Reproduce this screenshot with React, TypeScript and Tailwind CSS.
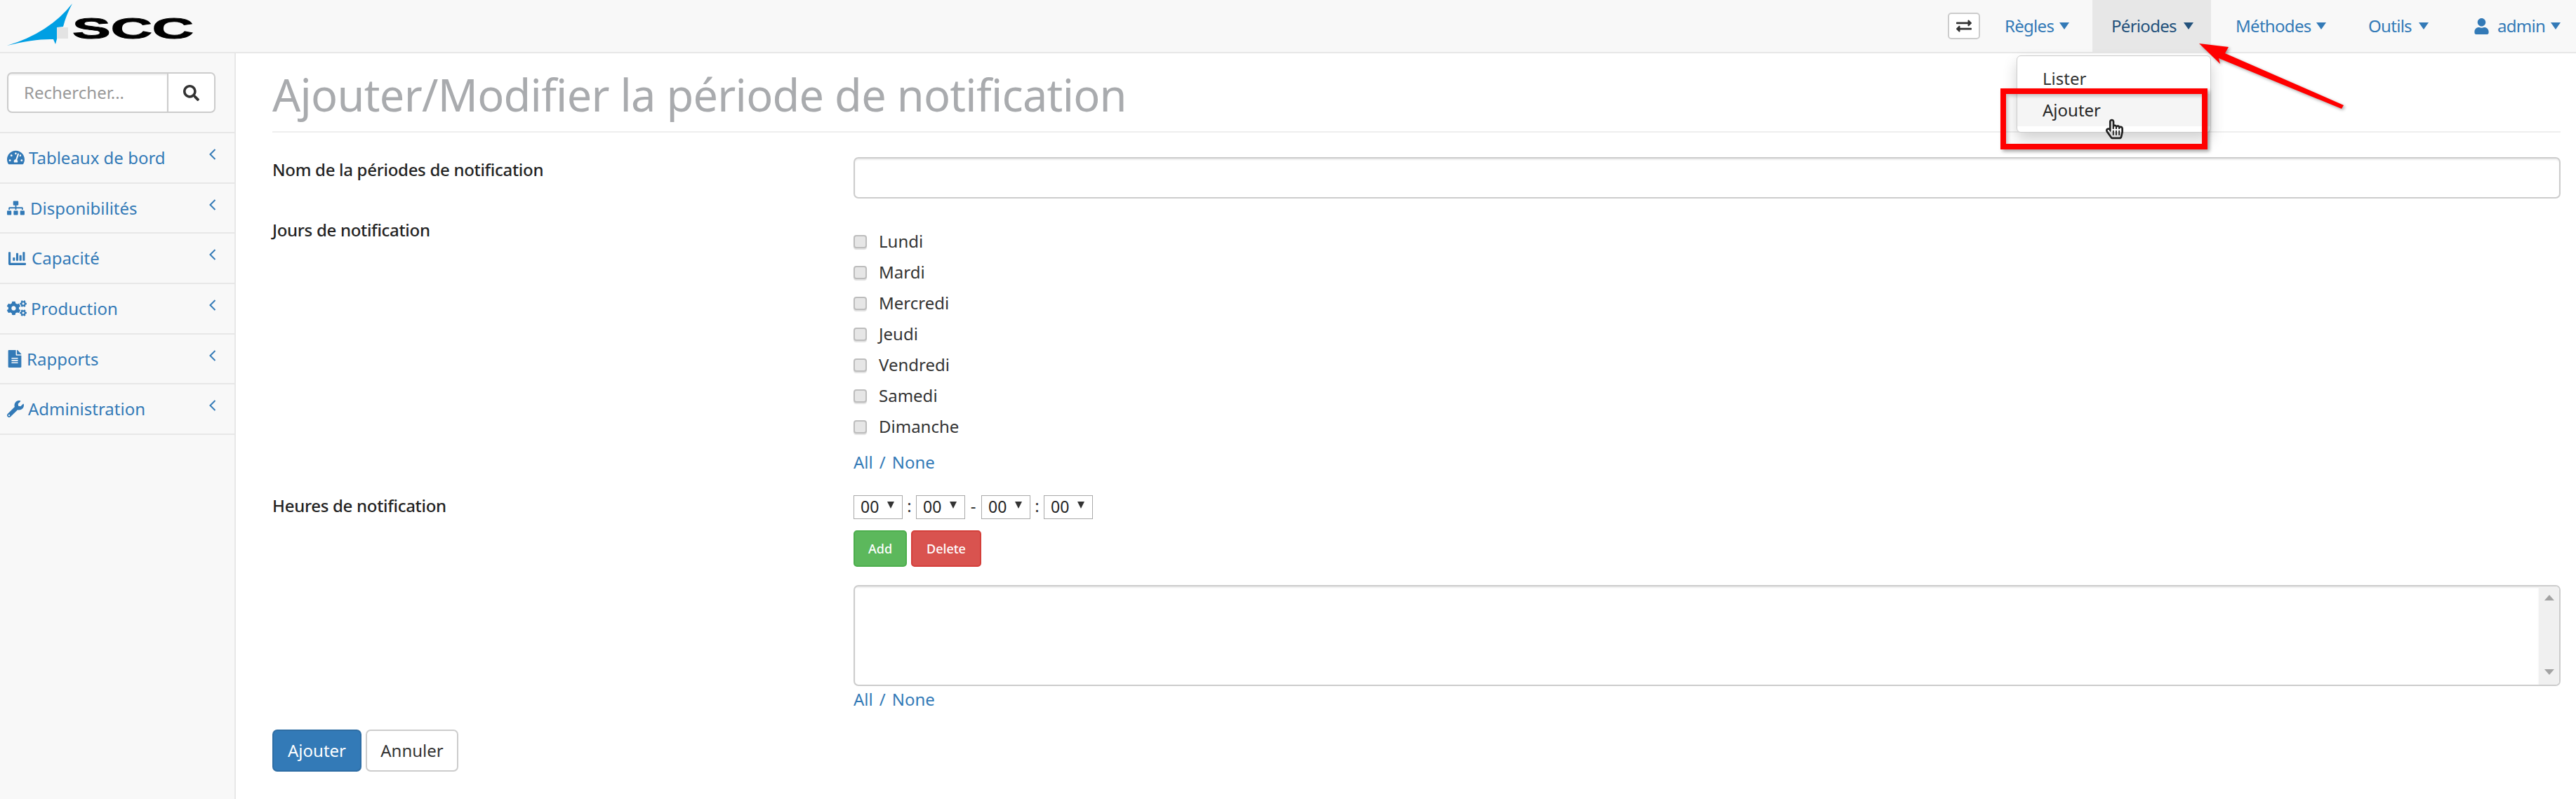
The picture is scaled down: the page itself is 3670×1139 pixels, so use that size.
import { FaChartBar, FaCogs, FaExchangeAlt, FaFileAlt, FaRegHandPointer, FaSearch, FaSitemap, FaTachometerAlt, FaUser, FaWrench } from "react-icons/fa";

const FONT = "font-['Noto_Sans',sans-serif]";

const SIDE_ITEMS = [
  { label: "Tableaux de bord", icon: <FaTachometerAlt className="h-[25px] w-[25px]" />, gap: "gap-[6px]" },
  { label: "Disponibilités", icon: <FaSitemap className="h-[25px] w-[25px]" />, gap: "gap-[8px]" },
  { label: "Capacité", icon: <FaChartBar className="h-[25px] w-[29px]" />, gap: "gap-[6px]" },
  { label: "Production", icon: <FaCogs className="h-[25px] w-[28px]" />, gap: "gap-[6px]" },
  { label: "Rapports", icon: <FaFileAlt className="h-[25px] w-[22px]" />, gap: "gap-[6px]" },
  { label: "Administration", icon: <FaWrench className="h-[24px] w-[24px]" />, gap: "gap-[6px]" },
];

const DAYS = ["Lundi", "Mardi", "Mercredi", "Jeudi", "Vendredi", "Samedi", "Dimanche"];

function NavItem({ label, width, active, icon, last }: { label: string; width: string; active?: boolean; icon?: React.ReactNode; last?: boolean }) {
  return (
    <a className={`ml-[8px] flex h-full items-center ${last ? "pl-[32px] pr-[22px]" : "pl-[27px] pr-[25px]"} ${active ? "bg-[#e7e7e7] text-[#23527c]" : "text-[#337ab7]"}`}>
      {icon}
      <span className={`${width} whitespace-nowrap tracking-[-0.7px]`}>{label}</span>
      <svg width="14" height="10" viewBox="0 0 14 10" className="ml-[7px]">
        <path d="M0 0 H14 L7 10 Z" fill="currentColor" />
      </svg>
    </a>
  );
}

function Logo() {
  return (
    <svg width="290" height="70" viewBox="0 0 290 70" className="block">
      <path d="M103 3 Q70 45 10 63 Q50 53 76 54 L79 61 L82 50 L81 37 L90 36 Q94 20 103 3 Z" fill="#009fe3" />
      <rect x="81" y="37" width="16" height="16" fill="#e3e3e3" />
      <text x="103" y="53" fontSize="43" fontWeight="700" fontFamily="Liberation Sans, sans-serif" textLength="173" lengthAdjust="spacingAndGlyphs" fill="#000" stroke="#000" strokeWidth="1">SCC</text>
    </svg>
  );
}

function TimeSelect() {
  return (
    <span className="relative block h-[34px] w-[70px]">
      <select className="h-full w-full appearance-none rounded-none border border-[#a9a9a9] bg-white pl-[9px] text-[23px] leading-none text-[#222]">
        <option>00</option>
      </select>
      <svg width="10" height="10" viewBox="0 0 10 10" className="pointer-events-none absolute right-[12px] top-[11px]">
        <path d="M0 0 H10 L5 10 Z" fill="#333" />
      </svg>
    </span>
  );
}

function AllNone({ className }: { className: string }) {
  return (
    <div className={`flex items-center text-[#337ab7] ${className}`}>
      <a>All</a>
      <span className="mx-[9px]">/</span>
      <a>None</a>
    </div>
  );
}

export default function App() {
  return (
    <div className={`${FONT} relative flex h-[1139px] flex-col overflow-hidden bg-white text-[24px] text-[#333]`}>
      {/* Navbar */}
      <nav className="flex h-[76px] shrink-0 items-center justify-between border-b-2 border-[#e7e7e7] bg-[#f8f8f8]">
        <Logo />
        <div className="flex h-[74px] items-center">
          <button className="flex h-[38px] w-[46px] items-center justify-center rounded-[5px] border-2 border-[#ccc] bg-white text-[#333]">
            <FaExchangeAlt className="h-[22px] w-[22px]" />
          </button>
          <NavItem label="Règles" width="w-[71px]" />
          <NavItem label="Périodes" width="w-[96px]" active />
          <NavItem label="Méthodes" width="w-[108px]" />
          <NavItem label="Outils" width="w-[65px]" />
          <NavItem label="admin" width="w-[69px]" last icon={<FaUser className="mr-[12px] h-[23px] w-[21px]" />} />
        </div>
      </nav>

      <div className="flex min-h-0 flex-1">
        {/* Sidebar */}
        <aside className="w-[336px] shrink-0 border-r-2 border-[#e7e7e7] bg-[#f8f8f8]">
          <div className="h-[114px] border-b-2 border-[#e7e7e7] px-[10px] pt-[27px]">
            <div className="flex h-[58px] w-[297px] overflow-hidden rounded-[7px] border-2 border-[#ccc] bg-white">
              <input
                placeholder="Rechercher..."
                className="w-[228px] border-r-2 border-[#ccc] px-[22px] shadow-[inset_0_2px_2px_rgba(0,0,0,0.075)] outline-none placeholder:text-[#999]"
              />
              <button className="flex flex-1 items-center justify-center text-[#333]">
                <FaSearch className="h-[23px] w-[23px]" />
              </button>
            </div>
          </div>
          {SIDE_ITEMS.map((item) => (
            <a key={item.label} className="flex h-[71.7px] items-center justify-between border-b-2 border-[#e7e7e7] pl-[10px] pr-[26px] text-[#337ab7]">
              <span className={`flex items-center ${item.gap}`}>
                {item.icon}
                {item.label}
              </span>
              <svg width="10" height="16" viewBox="0 0 10 16" className="mb-[10px]">
                <path d="M8.5 1 L1.5 8 L8.5 15" fill="none" stroke="currentColor" strokeWidth="2" />
              </svg>
            </a>
          ))}
        </aside>

        {/* Main */}
        <main className="min-w-0 flex-1 pl-[52px] pr-[22px]">
          <div className="flex h-[113px] items-end border-b-2 border-[#eee] pb-[18px]">
            <h1 className="text-[63px] leading-[1.1] font-normal tracking-[-0.7px] text-[#a9abae]">Ajouter/Modifier la période de notification</h1>
          </div>

          <div className="mt-[35px] flex">
            <label className="w-[828px] shrink-0 font-medium tracking-[-0.3px] text-[#222]">Nom de la périodes de notification</label>
            <input className="h-[59px] flex-1 rounded-[7px] border-2 border-[#ccc] shadow-[inset_0_2px_2px_rgba(0,0,0,0.075)] outline-none" />
          </div>

          <div className="mt-[39px] flex">
            <label className="-mt-[12px] w-[828px] shrink-0 font-medium tracking-[-0.3px] text-[#222]">Jours de notification</label>
            <div>
              {DAYS.map((d) => (
                <label key={d} className="flex h-[44px] items-center gap-[17px]">
                  <input type="checkbox" className="h-[19px] w-[19px] appearance-none rounded-[4px] border-2 border-[#bdbdbd] bg-[#e6e6e6] shadow-[0_2px_1px_rgba(0,0,0,0.12)]" />
                  {d}
                </label>
              ))}
              <AllNone className="mt-[7px] h-[44px]" />
            </div>
          </div>

          <div className="mt-[23px] flex">
            <label className="flex h-[34px] w-[828px] shrink-0 items-center font-medium tracking-[-0.3px] text-[#222]">Heures de notification</label>
            <div className="min-w-0 flex-1">
              <div className="flex h-[34px] items-center">
                <TimeSelect />
                <span className="w-[19px] text-center">:</span>
                <TimeSelect />
                <span className="w-[23px] text-center">-</span>
                <TimeSelect />
                <span className="w-[19px] text-center">:</span>
                <TimeSelect />
              </div>
              <div className="mt-[18px] flex gap-[6px] text-[18px] font-medium text-white">
                <button className="h-[52px] w-[76px] rounded-[5px] border-2 border-[#4cae4c] bg-[#5cb85c]">Add</button>
                <button className="h-[52px] w-[100px] rounded-[5px] border-2 border-[#d43f3a] bg-[#d9534f]">Delete</button>
              </div>
              <div className="mt-[26px] flex h-[144px] overflow-hidden rounded-[7px] border-2 border-[#ccc]">
                <textarea className="flex-1 resize-none shadow-[inset_0_2px_2px_rgba(0,0,0,0.075)] outline-none" />
                <div className="flex w-[29px] flex-col items-center justify-between bg-[#f0f0f0] pb-[14px] pt-[12px]">
                  <svg width="14" height="8" viewBox="0 0 14 8"><path d="M7 0 L14 8 H0 Z" fill="#a3a3a3" /></svg>
                  <svg width="14" height="8" viewBox="0 0 14 8"><path d="M0 0 H14 L7 8 Z" fill="#a3a3a3" /></svg>
                </div>
              </div>
              <AllNone className="h-[38px]" />
            </div>
          </div>

          <div className="mt-[24px] flex gap-[6px]">
            <button className="h-[60px] w-[127px] rounded-[7px] border-2 border-[#2e6da4] bg-[#337ab7] text-white">Ajouter</button>
            <button className="h-[60px] w-[132px] rounded-[7px] border-2 border-[#ccc] bg-white">Annuler</button>
          </div>
        </main>
      </div>

      {/* Open dropdown */}
      <div className="absolute left-[2873px] top-[79px] h-[110px] w-[277px] rounded-[6px] border border-[#ccc] bg-white pt-[9px] shadow-[0_10px_20px_rgba(0,0,0,0.18)]">
        <div className="flex h-[45px] items-center pl-[36px] text-[#333]">Lister</div>
        <div className="flex h-[46px] items-center bg-[#f5f5f5] pl-[36px] text-[#262626]">Ajouter</div>
      </div>

      {/* Screenshot annotations */}
      <div className="absolute left-[2850px] top-[126px] h-[87px] w-[295px] border-[8px] border-[#ff0000] shadow-[3px_3px_5px_rgba(0,0,0,0.35),inset_3px_3px_5px_rgba(0,0,0,0.2)]" />
      <svg width="240" height="120" viewBox="0 0 240 120" className="absolute left-[3120px] top-[50px] drop-shadow-[2px_2px_2px_rgba(0,0,0,0.35)]">
        <path d="M13 12 L55 17 L50 26 L219 100 L216 105 L41 33 L43 41 Z" fill="#ff0000" />
      </svg>
      <div className="absolute left-[3000px] top-[168px]">
        <FaRegHandPointer className="h-[32px] w-[25px] text-[#222]" />
      </div>
    </div>
  );
}
